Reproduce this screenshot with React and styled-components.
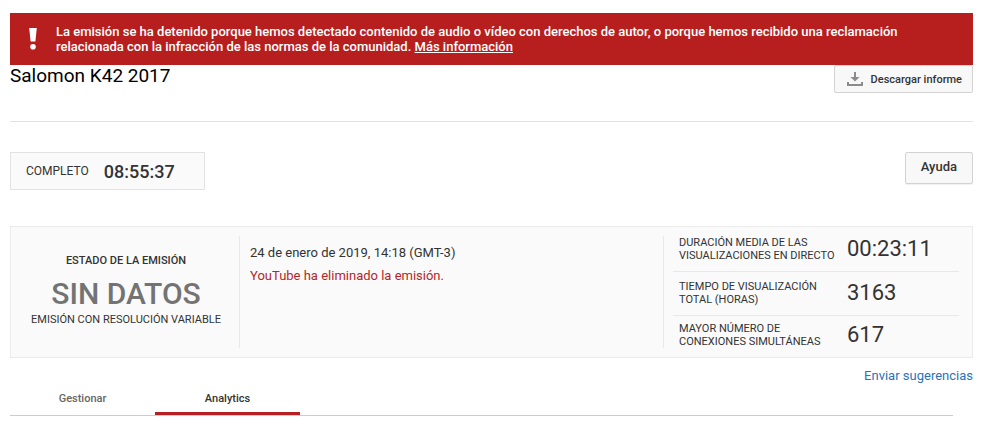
import styled, { createGlobalStyle } from 'styled-components'

const GlobalStyle = createGlobalStyle`
  * {
    box-sizing: border-box;
  }

  body {
    margin: 0;
    background: #fff;
    color: #333;
    font-family: Roboto, 'Liberation Sans', Arial, sans-serif;
    font-size: 13px;
  }
`

const Page = styled.main`
  padding: 13px 15px 0 10px;
`

const Alert = styled.div`
  display: flex;
  align-items: center;
  gap: 18px;
  padding: 11px 18px;
  background: #b71f1f;
  color: #fff;
`

const AlertIcon = styled.svg`
  flex: none;
  width: 10px;
  height: 22px;
  fill: #fff;
`

const AlertText = styled.p`
  max-width: 864px;
  margin: 0;
  font-weight: 500;
  line-height: 15px;
`

const AlertLink = styled.a`
  color: inherit;
  text-decoration: underline;
`

const Header = styled.header`
  display: flex;
  justify-content: space-between;
  align-items: flex-start;
  padding-bottom: 28px;
  border-bottom: 1px solid #e2e2e2;
`

const Title = styled.h1`
  margin: 0;
  color: #000;
  font-size: 19px;
  font-weight: 400;
  line-height: 22px;
`

const Button = styled.button`
  display: flex;
  align-items: center;
  gap: 6px;
  height: ${({ $large }) => ($large ? '32px' : '28px')};
  padding: ${({ $large }) => ($large ? '0 15px 3px' : '0 10px')};
  border: 1px solid #d3d3d3;
  border-radius: 2px;
  background: #f8f8f8;
  box-shadow: ${({ $large }) => ($large ? '0 1px 0 rgba(0, 0, 0, 0.05)' : 'none')};
  color: #333;
  font-family: inherit;
  font-size: ${({ $large }) => ($large ? '13px' : '11px')};
  font-weight: 500;
  cursor: pointer;
`

const DownloadIcon = styled.svg`
  width: 20px;
  height: 16px;
  fill: #8c8c8c;
`

const Toolbar = styled.div`
  display: flex;
  justify-content: space-between;
  align-items: flex-start;
  margin: 30px 0 36px;
`

const Timer = styled.div`
  display: flex;
  align-items: center;
  gap: 15px;
  width: 195px;
  height: 38px;
  padding: 0 15px;
  border: 1px solid #e2e2e2;
  background: #fafafa;
  font-size: 12px;
`

const TimerValue = styled.strong`
  font-size: 18px;
  font-weight: 500;
`

const Panel = styled.section`
  display: grid;
  grid-template-columns: 229px 1fr 309px;
  padding: 9px 0;
  border: 1px solid #ebebeb;
  background: #fafafa;
`

const Status = styled.div`
  display: flex;
  flex-direction: column;
  align-items: center;
  padding: 17px 0 0 2px;
  border-right: 1px solid #e8e8e8;
  font-size: 11px;
  line-height: 16px;
  white-space: nowrap;
`

const StatusLabel = styled.span`
  font-weight: 500;
`

const StatusValue = styled.strong`
  margin: 8px 0 1px;
  color: #737373;
  font-size: 30px;
  font-weight: 500;
  line-height: 34px;
`

const Events = styled.div`
  padding: 5px 10px;
  line-height: 23px;
`

const Event = styled.p`
  margin: 0;
  color: ${({ $error }) => ($error ? '#b3262b' : '#333')};
`

const Stats = styled.dl`
  margin: 0;
  padding: 0 13px 0 9px;
  border-left: 1px solid #e8e8e8;
`

const Stat = styled.div`
  display: grid;
  grid-template-columns: 168px 1fr;
  align-items: center;
  height: 44px;
  padding: 0 0 2px 6px;
  border-bottom: 1px solid #e8e8e8;

  &:first-child {
    height: 36px;
    padding-bottom: 10px;
  }

  &:last-child {
    height: 32px;
    padding: 6px 0 0 6px;
    border-bottom: 0;
  }
`

const StatLabel = styled.dt`
  font-size: 11px;
  line-height: 13px;
  white-space: pre-line;
`

const StatValue = styled.dd`
  margin: 0;
  font-size: 22px;
  line-height: 26px;
`

const Feedback = styled.div`
  display: flex;
  justify-content: flex-end;
  padding-top: 10px;
  line-height: 16px;
`

const FeedbackLink = styled.a`
  color: #2b73b9;
  text-decoration: none;
`

const Tabs = styled.nav`
  display: flex;
  margin-right: 20px;
  border-bottom: 1px solid #ccc;
`

const Tab = styled.a`
  width: 145px;
  height: 31px;
  padding-top: 7px;
  border-bottom: 3px solid ${({ $active }) => ($active ? '#b71f23' : 'transparent')};
  color: ${({ $active }) => ($active ? '#333' : '#666')};
  font-size: 11px;
  font-weight: 500;
  line-height: 16px;
  text-align: center;
  text-decoration: none;
`

const stats = [
  { label: 'DURACIÓN MEDIA DE LAS\nVISUALIZACIONES EN DIRECTO', value: '00:23:11' },
  { label: 'TIEMPO DE VISUALIZACIÓN\nTOTAL (HORAS)', value: '3163' },
  { label: 'MAYOR NÚMERO DE\nCONEXIONES SIMULTÁNEAS', value: '617' }
]

const App = () => {
  return (
    <>
      <GlobalStyle />
      <Page>
        <Alert role='alert'>
          <AlertIcon viewBox='0 0 10 22' aria-hidden='true'>
            <path d='M1.2 0h7.6L7.4 13.5H2.6z' />
            <circle cx='5' cy='18.8' r='2.8' />
          </AlertIcon>
          <AlertText>
            La emisión se ha detenido porque hemos detectado contenido de audio o vídeo con derechos de
            autor, o porque hemos recibido una reclamación relacionada con la infracción de las normas de
            la comunidad. <AlertLink href='#info'>Más información</AlertLink>
          </AlertText>
        </Alert>
        <Header>
          <Title>Salomon K42 2017</Title>
          <Button type='button'>
            <DownloadIcon viewBox='0 0 20 16' aria-hidden='true'>
              <path d='M9 1h2v5h3.5L10 10.500 5.500 6H9z' />
              <path d='M2 11h2v2h12v-2h2v4H2z' />
            </DownloadIcon>
            Descargar informe
          </Button>
        </Header>
        <Toolbar>
          <Timer>
            <span>COMPLETO</span>
            <TimerValue>08:55:37</TimerValue>
          </Timer>
          <Button type='button' $large>
            Ayuda
          </Button>
        </Toolbar>
        <Panel>
          <Status>
            <StatusLabel>ESTADO DE LA EMISIÓN</StatusLabel>
            <StatusValue>SIN DATOS</StatusValue>
            <span>EMISIÓN CON RESOLUCIÓN VARIABLE</span>
          </Status>
          <Events>
            <Event>24 de enero de 2019, 14:18 (GMT-3)</Event>
            <Event $error>YouTube ha eliminado la emisión.</Event>
          </Events>
          <Stats>
            {stats.map((stat) => (
              <Stat key={stat.value}>
                <StatLabel>{stat.label}</StatLabel>
                <StatValue>{stat.value}</StatValue>
              </Stat>
            ))}
          </Stats>
        </Panel>
        <Feedback>
          <FeedbackLink href='#feedback'>Enviar sugerencias</FeedbackLink>
        </Feedback>
        <Tabs>
          <Tab href='#gestionar'>Gestionar</Tab>
          <Tab href='#analytics' $active aria-current='page'>
            Analytics
          </Tab>
        </Tabs>
      </Page>
    </>
  )
}

export default App
